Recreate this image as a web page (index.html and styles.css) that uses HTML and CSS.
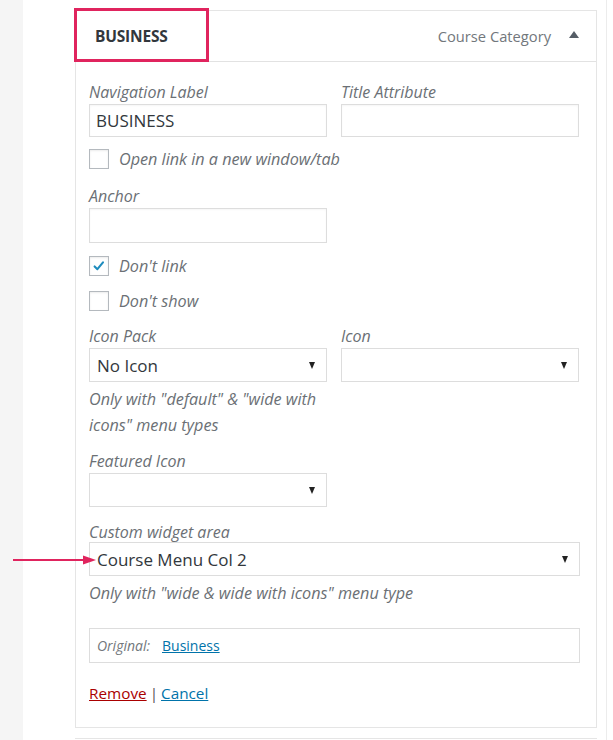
FILE: index.html
```html
<!DOCTYPE html>
<html>
<head>
<meta charset="utf-8">
<link rel="stylesheet" href="styles.css">
</head>
<body>
<div class="page">
  <div class="strip"></div>
  <div class="main">
    <div class="item">
      <div class="item-head">
        <span class="item-title">BUSINESS</span>
        <span class="item-type">Course Category</span>
        <span class="item-toggle"></span>
        <div class="highlight"></div>
      </div>
      <div class="item-body">
        <div class="row2">
          <div class="field">
            <label class="lbl">Navigation Label</label>
            <div class="input">BUSINESS</div>
          </div>
          <div class="field">
            <label class="lbl">Title Attribute</label>
            <div class="input"></div>
          </div>
        </div>
        <div class="check c-open"><span class="box"></span><span class="clbl">Open link in a new window/tab</span></div>
        <div class="field half f-anchor">
          <label class="lbl">Anchor</label>
          <div class="input tall"></div>
        </div>
        <div class="check c-link"><span class="box checked"><svg viewBox="0 0 20 20" width="16" height="16"><path d="M4.5 10.5 L8 14 L15 5.5" fill="none" stroke="#1e8cbe" stroke-width="2.6" stroke-linecap="round" stroke-linejoin="round"/></svg></span><span class="clbl">Don't link</span></div>
        <div class="check c-show"><span class="box"></span><span class="clbl">Don't show</span></div>
        <div class="row2 r-icon">
          <div class="field">
            <label class="lbl">Icon Pack</label>
            <div class="select"><span>No Icon</span><i class="caret"></i></div>
            <p class="help">Only with "default" &amp; "wide with icons" menu types</p>
          </div>
          <div class="field">
            <label class="lbl">Icon</label>
            <div class="select"><span></span><i class="caret"></i></div>
          </div>
        </div>
        <div class="field half f-feat">
          <label class="lbl">Featured Icon</label>
          <div class="select"><span></span><i class="caret"></i></div>
        </div>
        <div class="field f-widget">
          <label class="lbl">Custom widget area</label>
          <div class="select"><span>Course Menu Col 2</span><i class="caret"></i></div>
          <p class="help">Only with "wide &amp; wide with icons" menu type</p>
        </div>
        <div class="original"><span class="orig-lbl">Original:</span><a class="orig-link">Business</a></div>
        <div class="actions"><a class="remove">Remove</a><span class="sep">|</span><a class="cancel">Cancel</a></div>
      </div>
    </div>
    <div class="next-item"></div>
  </div>
  <div class="arrow"><svg width="84" height="10" viewBox="0 0 84 10"><line x1="0" y1="5" x2="72" y2="5" stroke="#e0245e" stroke-width="2"/><path d="M70 0.5 L83 5 L70 9.5 Z" fill="#e0245e"/></svg></div>
</div>
</body>
</html>
```

FILE: styles.css
```css
* { box-sizing: border-box; }
html, body { margin: 0; padding: 0; background: #fff; }
body {
  font-family: "Open Sans", "Noto Sans", sans-serif;
  font-size: 14px;
  color: #6b7075;
}
.page {
  position: relative;
  display: flex;
  width: 613px;
  height: 740px;
  overflow: hidden;
}
.strip {
  width: 23px;
  flex: none;
  background: #f5f5f5;
}
.main {
  width: 584px;
  flex: none;
  border-right: 1px solid #ececec;
  padding: 10px 0 0 52px;
}
.item {
  width: 522px;
  border: 1px solid #e5e5e5;
}
.item-head {
  position: relative;
  height: 51px;
  display: flex;
  align-items: center;
  padding: 0 17px 0 19px;
  border-bottom: 1px solid #e2e2e2;
}
.item-title {
  font-weight: 700;
  font-size: 15.5px;
  color: #32373c;
  flex: 1;
  letter-spacing: -0.2px;
}
.item-type {
  font-size: 14.7px;
  color: #72777c;
  margin-right: 18px;
}
.item-toggle {
  width: 0; height: 0;
  border-left: 5px solid transparent;
  border-right: 5px solid transparent;
  border-bottom: 7px solid #555d66;
  margin-bottom: 4px;
}
.highlight {
  position: absolute;
  left: -2px;
  top: -3px;
  width: 135px;
  height: 54px;
  border: 3px solid #e0245e;
}
.item-body {
  padding: 20px 16px 24px 13px;
}
.row2 {
  display: grid;
  grid-template-columns: 238px 238px;
  column-gap: 14px;
}
.field { display: flex; flex-direction: column; }
.half { width: 238px; }
.lbl {
  font-style: italic;
  font-size: 16px;
  line-height: 20px;
  color: #6b7075;
  margin-bottom: 2px;
}
.input {
  height: 33px;
  border: 1px solid #ddd;
  box-shadow: inset 0 1px 2px rgba(0,0,0,0.04);
  font-size: 17px;
  line-height: 31px;
  padding: 0 6px;
  color: #32373c;
}
.input.tall { height: 35px; }
.check {
  display: flex;
  align-items: center;
  height: 20px;
}
.box {
  width: 20px; height: 20px;
  border: 1px solid #b4b9be;
  box-shadow: inset 0 1px 2px rgba(0,0,0,0.08);
  margin-right: 10px;
  display: flex;
  align-items: center;
  justify-content: center;
  flex: none;
}
.clbl {
  font-style: italic;
  font-size: 16.2px;
  line-height: 20px;
}
.c-open { margin-top: 12px; }
.f-anchor { margin-top: 17px; }
.c-link { margin-top: 13px; }
.c-show { margin-top: 15px; }
.r-icon { margin-top: 15px; }
.select {
  height: 34px;
  border: 1px solid #ddd;
  display: flex;
  align-items: center;
  padding: 0 7px 0 7px;
  font-size: 17px;
  color: #32373c;
}
.select span { flex: 1; }
.caret {
  width: 0; height: 0;
  border-left: 3.5px solid transparent;
  border-right: 3.5px solid transparent;
  border-top: 7px solid #222;
  margin-right: 4px;
}
.help {
  margin: 4px 0 0;
  font-style: italic;
  font-size: 16.2px;
  line-height: 26px;
}
.f-feat { margin-top: 13px; }
.f-widget { margin-top: 15px; }
.f-widget .lbl { margin-bottom: 0; }
.original {
  margin-top: 22px;
  height: 35px;
  border: 1px solid #ddd;
  display: flex;
  align-items: center;
  padding: 0 7px;
  font-size: 14px;
}
.orig-lbl { font-style: italic; color: #72777c; margin-right: 12px; }
.orig-link { color: #0073aa; text-decoration: underline; }
.actions {
  margin-top: 20px;
  font-size: 15.3px;
  line-height: 20px;
}
.remove { color: #a00; text-decoration: underline; }
.sep { color: #555; margin: 0 3px; }
.cancel { color: #0073aa; text-decoration: underline; }
.next-item {
  margin-top: 10px;
  width: 522px;
  border-top: 1px solid #e5e5e5;
}
.arrow {
  position: absolute;
  left: 13px;
  top: 555px;
  line-height: 0;
}
```
